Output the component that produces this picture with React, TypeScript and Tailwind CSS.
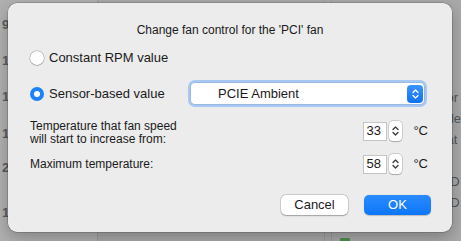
function Chevrons({ color = '#3a3a3a', w = 7 }: { color?: string; w?: number }) {
	return (
		<svg width={w} height="12" viewBox="0 0 7 12" fill="none">
			<path d="M1 4.5 L3.5 2 L6 4.5" stroke={color} strokeWidth="1.3" strokeLinecap="round" strokeLinejoin="round" />
			<path d="M1 7.5 L3.5 10 L6 7.5" stroke={color} strokeWidth="1.3" strokeLinecap="round" strokeLinejoin="round" />
		</svg>
	);
}

function Stepper({ value }: { value: string }) {
	return (
		<div className="flex items-center">
			<div className="w-[24px] h-[19px] bg-white border border-[#c4c4c4] flex items-center pl-[2px] text-[13px] text-[#1a1a1a]">
				{value}
			</div>
			<div className="ml-[2px] w-[13px] h-[20px] bg-white rounded-[4px] shadow-[0_0_0_0.5px_rgba(0,0,0,0.22),0_0.5px_1px_rgba(0,0,0,0.2)] flex flex-col items-center justify-center">
				<Chevrons />
			</div>
			<span className="ml-[11px] text-[13px] text-[#1a1a1a]">°C</span>
		</div>
	);
}

function App() {
	const leftNums = [
		{ n: '9', h: 'h-[36px]' },
		{ n: '1', h: 'h-[36px]' },
		{ n: '1', h: 'h-[37px]' },
		{ n: '1', h: 'h-[35px]' },
		{ n: '2', h: 'h-[45px]' },
		{ n: '1', h: 'h-[36px]' },
	];
	const rightFrags = ['or', 'de', 'at', '', '/D', '/D'];

	return (
		<div className="relative w-[461px] h-[241px] overflow-hidden bg-[#a9a9a9] font-['Liberation_Sans',Arial,sans-serif]">
			{/* dimmed window behind the sheet */}
			<div className="flex h-full">
				<div className="w-[100px] border-r border-[#9c9c9c] bg-[#b0b0b0] pt-[17px] pl-[2px] flex flex-col">
					{leftNums.map((r, i) => (
						<div key={i} className={`${r.h} text-[13px] font-bold text-[#5c5c5c] leading-[16px]`}>
							{r.n}
						</div>
					))}
				</div>
				<div className="w-[230px] border-r border-[#9c9c9c]" />
				<div className="w-[7px] border-r border-[#9c9c9c]" />
				<div className="flex-1 relative flex flex-col pl-[115px] pt-[90px] text-[13px] text-[#555] leading-[16px]">
					{rightFrags.map((t, i) => (
						<div key={i} className="h-[21px] whitespace-nowrap">
							{t}
						</div>
					))}
					<div className="absolute left-[8px] bottom-[-4px] w-[10px] h-[7px] bg-[#4f8f4f] rounded-[1px]" />
				</div>
			</div>

			{/* sheet */}
			<div className="absolute left-[8px] top-[3px] w-[444px] h-[229px] bg-[#ececec] rounded-[9px] shadow-[0_0_0_0.5px_rgba(0,0,0,0.3),0_6px_16px_rgba(0,0,0,0.25)] flex flex-col px-[22px] pt-[19px] text-[#1a1a1a]">
				<div className="text-center text-[12px] leading-[16px]">Change fan control for the 'PCI' fan</div>

				<div className="mt-[12px] flex items-center h-[16px]">
					<div className="w-[14px] h-[14px] rounded-full bg-white shadow-[0_0_0_0.5px_rgba(0,0,0,0.3),0_0.5px_1px_rgba(0,0,0,0.25)]" />
					<span className="ml-[5px] text-[13px]">Constant RPM value</span>
				</div>

				<div className="mt-[14px] flex items-center h-[27px]">
					<div className="w-[14px] h-[14px] rounded-full bg-[#1a82fb] flex items-center justify-center">
						<div className="w-[6px] h-[6px] rounded-full bg-white" />
					</div>
					<span className="ml-[5px] text-[13px]">Sensor-based value</span>
					<div className="ml-auto mr-[3px] w-[239px] h-[27px] rounded-[7px] bg-[#a7c8f4] p-[3px]">
						<div className="h-full bg-white rounded-[4px] flex items-center pl-[27px] pr-[1px] shadow-[0_0_0_0.5px_rgba(0,0,0,0.15)]">
							<span className="text-[13px] flex-1">PCIE Ambient</span>
							<div className="w-[16px] h-[18px] rounded-[4px] bg-gradient-to-b from-[#3b92ff] to-[#0b72f5] flex items-center justify-center">
								<Chevrons color="#ffffff" />
							</div>
						</div>
					</div>
				</div>

				<div className="mt-[11px] flex items-center h-[26px]">
					<div className="pt-[4px] text-[12px] leading-[13px]">
						<div>Temperature that fan speed</div>
						<div>will start to increase from:</div>
					</div>
					<div className="ml-auto mr-[2px]">
						<Stepper value="33" />
					</div>
				</div>

				<div className="mt-[8px] flex items-center h-[24px]">
					<div className="text-[12px] leading-[14px]">Maximum temperature:</div>
					<div className="ml-auto mr-[2px]">
						<Stepper value="58" />
					</div>
				</div>

				<div className="mt-[19px] flex justify-end gap-[16px] mr-[-1px]">
					<button className="w-[67px] h-[20px] rounded-[5px] bg-white text-[13px] text-[#1a1a1a] shadow-[0_0_0_0.5px_rgba(0,0,0,0.2),0_0.5px_1.5px_rgba(0,0,0,0.25)]">
						Cancel
					</button>
					<button className="w-[67px] h-[20px] rounded-[5px] bg-gradient-to-b from-[#2a8bff] to-[#0a76f8] text-[13px] text-white shadow-[0_0.5px_1px_rgba(0,0,0,0.2)]">
						OK
					</button>
				</div>
			</div>
		</div>
	);
}

export default App;
